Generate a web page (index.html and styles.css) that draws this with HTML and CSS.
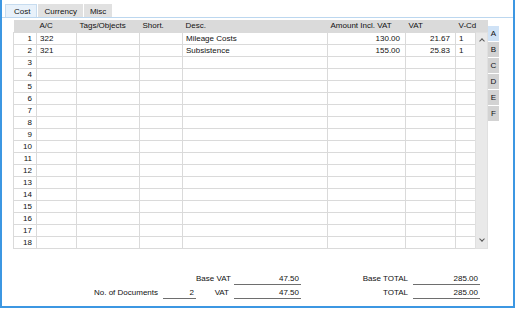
FILE: index.html
```html
<!DOCTYPE html>
<html>
<head>
  <title>Cost</title>
  <link rel="stylesheet" href="styles.css">
</head>
<body>
  <div class="window">
    <div class="tabs">
      <span class="tab active">Cost</span>
      <span class="tab">Currency</span>
      <span class="tab">Misc</span>
    </div>
    <div class="panel">
      <div class="grid-wrap">
        <table class="grid">
          <colgroup>
            <col class="c-num"><col class="c-ac"><col class="c-tags"><col class="c-short"><col class="c-desc">
            <col class="c-amt"><col class="c-vat"><col class="c-vcd"><col class="c-scroll">
          </colgroup>
          <thead>
            <tr>
              <th></th><th>A/C</th><th>Tags/Objects</th><th>Short.</th><th>Desc.</th>
              <th>Amount Incl. VAT</th><th>VAT</th><th>V-Cd</th><th></th>
            </tr>
          </thead>
          <tbody id="rows"></tbody>
        </table>
        <div class="side-tabs">
          <span class="side-tab active">A</span>
          <span class="side-tab">B</span>
          <span class="side-tab">C</span>
          <span class="side-tab">D</span>
          <span class="side-tab">E</span>
          <span class="side-tab">F</span>
        </div>
      </div>

      <div class="footer">
        <span class="label"></span><span></span><span class="label">Base VAT</span><span class="field">47.50</span>
        <span class="label">Base TOTAL</span><span class="field">285.00</span>
        <span class="label">No. of Documents</span><span class="field">2</span><span class="label">VAT</span><span class="field">47.50</span>
        <span class="label">TOTAL</span><span class="field">285.00</span>
      </div>
    </div>
  </div>

  <script>
    const data = [
      ['322', '', '', 'Mileage Costs', '130.00', '21.67', '1'],
      ['321', '', '', 'Subsistence', '155.00', '25.83', '1']
    ];
    const body = document.getElementById('rows');
    for (let i = 1; i <= 18; i++) {
      const r = data[i - 1] || ['', '', '', '', '', '', ''];
      const tr = document.createElement('tr');
      let html = '<td class="num">' + i + '</td>';
      html += '<td>' + r[0] + '</td><td>' + r[1] + '</td><td>' + r[2] + '</td><td>' + r[3] + '</td>';
      html += '<td class="right">' + r[4] + '</td><td class="right">' + r[5] + '</td><td>' + r[6] + '</td>';
      if (i === 1) {
        html += '<td class="scroll" rowspan="18"><div class="scroll-in"><span class="arrow up"></span><span class="arrow down"></span></div></td>';
      }
      tr.innerHTML = html;
      body.appendChild(tr);
    }
  </script>
</body>
</html>
```

FILE: styles.css
```css
body { margin: 0; background: #fff; font-family: "Liberation Sans", Arial, sans-serif; font-size: 8px; color: #111; }
.window { width: 515px; height: 308px; box-sizing: border-box; border: 2px solid #3c97e2; border-top: 0; padding-top: 4px; }

.tabs { display: flex; padding-left: 3px; height: 13px; }
.tab { background: #e1e1e1; border: 1px solid #e1e1e1; border-bottom: 0; padding: 0 5px; line-height: 13px; margin-right: 1px; }
.tab.active { background: #e8f1fa; border-color: #c7dcef; padding: 0 6px 0 8px; }

.panel { border-top: 1px solid #bcd7ef; padding-top: 2px; }

.grid-wrap { display: flex; margin-left: 11px; }
.grid { border-collapse: collapse; table-layout: fixed; width: 474px; }
.c-num { width: 23px; }
.c-ac { width: 40px; }
.c-tags { width: 63px; }
.c-short { width: 43px; }
.c-desc { width: 145px; }
.c-amt { width: 78px; }
.c-vat { width: 50px; }
.c-vcd { width: 20px; }
.c-scroll { width: 12px; }

.grid th { background: #dadada; font-weight: normal; text-align: left; height: 12px; padding: 0 0 0 3px; line-height: 12px; border: 0; white-space: nowrap; }
.grid td { height: 11px; padding: 0 0 0 3px; line-height: 11px; border: 1px solid #dadada; white-space: nowrap; overflow: hidden; }
.grid td.num { text-align: right; padding: 0 4px 0 0; }
.grid td.right { text-align: right; padding: 0 5px 0 0; }
.grid td.scroll { background: #e9e9e9; padding: 0; border-color: #e0e0e0; vertical-align: top; }
.scroll-in { height: 215px; display: flex; flex-direction: column; justify-content: space-between; align-items: center; padding: 4px 0; box-sizing: border-box; }
.arrow { width: 3px; height: 3px; border-left: 1px solid #555; border-top: 1px solid #555; }
.arrow.up { transform: rotate(45deg); margin-top: 2px; }
.arrow.down { transform: rotate(225deg); margin-bottom: 3px; }

.side-tabs { display: flex; flex-direction: column; gap: 1px; padding-top: 6px; }
.side-tab { width: 11px; height: 15px; background: #d3d3d3; text-align: center; line-height: 15px; }
.side-tab.active { background: #cfe2f6; }

.footer { display: grid; grid-template-columns: 161px 33px 38px 67px 112px 67px; row-gap: 2px; margin-top: 24px; }
.label { text-align: right; padding-right: 5px; line-height: 12px; white-space: nowrap; }
.field { text-align: right; border-bottom: 1px solid #6e6e6e; line-height: 11px; height: 11px; padding-right: 2px; white-space: nowrap; }
```
